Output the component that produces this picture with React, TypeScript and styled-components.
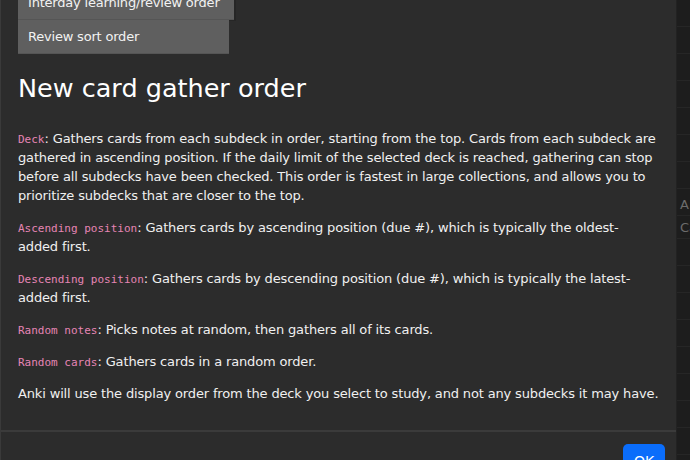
import React from 'react';
import styled, { createGlobalStyle } from 'styled-components';

const GlobalStyle = createGlobalStyle`
  html, body {
    margin: 0;
    padding: 0;
    background: #1c1c1c;
    overflow: hidden;
  }
  * { box-sizing: border-box; }
`;

type Entry = { code?: string; text: string };

const entries: Entry[] = [
  {
    code: 'Deck',
    text: ': Gathers cards from each subdeck in order, starting from the top. Cards from each subdeck are gathered in ascending position. If the daily limit of the selected deck is reached, gathering can stop before all subdecks have been checked. This order is fastest in large collections, and allows you to prioritize subdecks that are closer to the top.',
  },
  {
    code: 'Ascending position',
    text: ': Gathers cards by ascending position (due #), which is typically the oldest-added first.',
  },
  {
    code: 'Descending position',
    text: ': Gathers cards by descending position (due #), which is typically the latest-added first.',
  },
  { code: 'Random notes', text: ': Picks notes at random, then gathers all of its cards.' },
  { code: 'Random cards', text: ': Gathers cards in a random order.' },
  { text: 'Anki will use the display order from the deck you select to study, and not any subdecks it may have.' },
];

const sideRows = ['', '', '', '', '', '', '', 'A', 'Ca', '', '', '', '', '', '', '', ''];

const App = () => {
  return (
    <>
      <GlobalStyle />
      <Screen>
        <Modal>
          <Body>
            <SectionList>
              <SectionItem $width={216} $shadow>Interday learning/review order</SectionItem>
              <SectionItem $width={211}>Review sort order</SectionItem>
            </SectionList>
            <Title>New card gather order</Title>
            {entries.map((e, i) => (
              <Para key={i}>
                {e.code && <Code>{e.code}</Code>}
                {e.text}
              </Para>
            ))}
          </Body>
          <Footer>
            <OkButton>OK</OkButton>
          </Footer>
        </Modal>
        <Backdrop>
          {sideRows.map((t, i) => (
            <SideRow key={i}>{t}</SideRow>
          ))}
        </Backdrop>
      </Screen>
    </>
  );
};

export default App;

const Screen = styled.div`
  display: flex;
  width: 690px;
  height: 460px;
  overflow: hidden;
  font-family: "DejaVu Sans", Verdana, sans-serif;
`;

const Modal = styled.div`
  width: 677px;
  flex-shrink: 0;
  background: #2c2c2c;
  border-left: 1px solid #3a3a3a;
  border-right: 1px solid #222;
  display: flex;
  flex-direction: column;
`;

const Body = styled.div`
  padding: 0 17.5px 0 17px;
`;

const SectionList = styled.div`
  display: flex;
  flex-direction: column;
  margin-top: -14px;
`;

const SectionItem = styled.div<{ $width: number; $shadow?: boolean }>`
  width: ${p => p.$width}px;
  height: 34px;
  display: flex;
  align-items: center;
  padding-left: 10px;
  background: #5f5f5f;
  color: #f2f2f2;
  font-size: 13px;
  letter-spacing: -0.2px;
  border-bottom: 1px solid #555;
  box-shadow: ${p => (p.$shadow ? '2px 1px 0 #262626' : 'none')};
`;

const Title = styled.h1`
  margin: 18px 0 25px;
  font-size: 25.5px;
  font-weight: 400;
  color: #ffffff;
  line-height: 32px;
`;

const Para = styled.p`
  margin: 0 0 13px;
  font-size: 13px;
  line-height: 19px;
  letter-spacing: -0.15px;
  color: #f0f0f0;
`;

const Code = styled.code`
  font-family: "DejaVu Sans Mono", "Liberation Mono", monospace;
  font-size: 11px;
  line-height: 1;
  letter-spacing: 0;
  color: #e685b5;
`;

const Footer = styled.div`
  margin-top: 14px;
  border-top: 2px solid #3b3b3b;
  display: flex;
  justify-content: flex-end;
  padding: 12px 11px 0 0;
`;

const OkButton = styled.button`
  width: 42px;
  height: 34px;
  border: none;
  border-radius: 5px;
  background: #0a6dfb;
  color: #fff;
  font-family: "DejaVu Sans", Verdana, sans-serif;
  font-size: 14px;
  padding: 0;
`;

const Backdrop = styled.div`
  flex: 1;
  background: #1d1d1d;
  overflow: hidden;
  display: flex;
  flex-direction: column;
`;

const SideRow = styled.div`
  height: 27px;
  border-bottom: 1px solid #262626;
  color: #6c6c6c;
  font-size: 13px;
  line-height: 23px;
  padding-left: 3px;
  white-space: nowrap;
  &:nth-child(8) { margin-top: 4px; height: 23px; }
  &:nth-child(9) { height: 23px; }
`;
